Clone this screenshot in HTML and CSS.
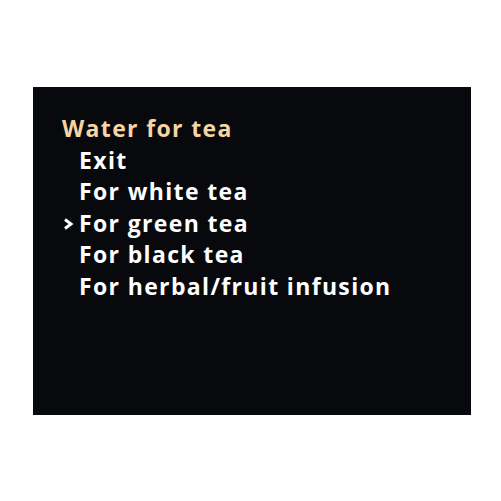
FILE: index.html
```html
<!DOCTYPE html>
<html>
<head>
<meta charset="utf-8">
<link rel="stylesheet" href="styles.css">
</head>
<body>
<div class="screen">
  <div class="title">Water for tea</div>
  <ul class="menu">
    <li class="item"><span class="mark"></span>Exit</li>
    <li class="item"><span class="mark"></span>For white tea</li>
    <li class="item selected"><span class="mark"><svg class="chev" viewBox="0 0 12 12" width="12" height="12"><path d="M3 1.5 L9 6 L3 10.5" fill="none" stroke="#ffffff" stroke-width="3" stroke-linejoin="miter"/></svg></span>For green tea</li>
    <li class="item"><span class="mark"></span>For black tea</li>
    <li class="item"><span class="mark"></span>For herbal/fruit infusion</li>
  </ul>
</div>
</body>
</html>
```
FILE: styles.css
```css
html, body {
  margin: 0;
  padding: 0;
  background: #ffffff;
}
body {
  width: 501px;
  height: 501px;
  display: flex;
  flex-direction: column;
  padding: 87px 0 0 33px;
  box-sizing: border-box;
}
.screen {
  width: 438px;
  height: 328px;
  background: #07090d;
  box-sizing: border-box;
  padding: 26px 0 0 29px;
  font-family: "Open Sans", "DejaVu Sans", sans-serif;
  font-weight: 700;
  font-size: 23px;
  letter-spacing: 1.35px;
  line-height: 31.6px;
}
.title {
  color: #f6d4a4;
}
.menu {
  list-style: none;
  margin: 0;
  padding: 0;
  color: #ffffff;
}
.item {
  display: flex;
  align-items: center;
}
.mark {
  width: 17px;
  flex: none;
  display: flex;
  align-items: center;
}
.chev {
  display: block;
}
```
